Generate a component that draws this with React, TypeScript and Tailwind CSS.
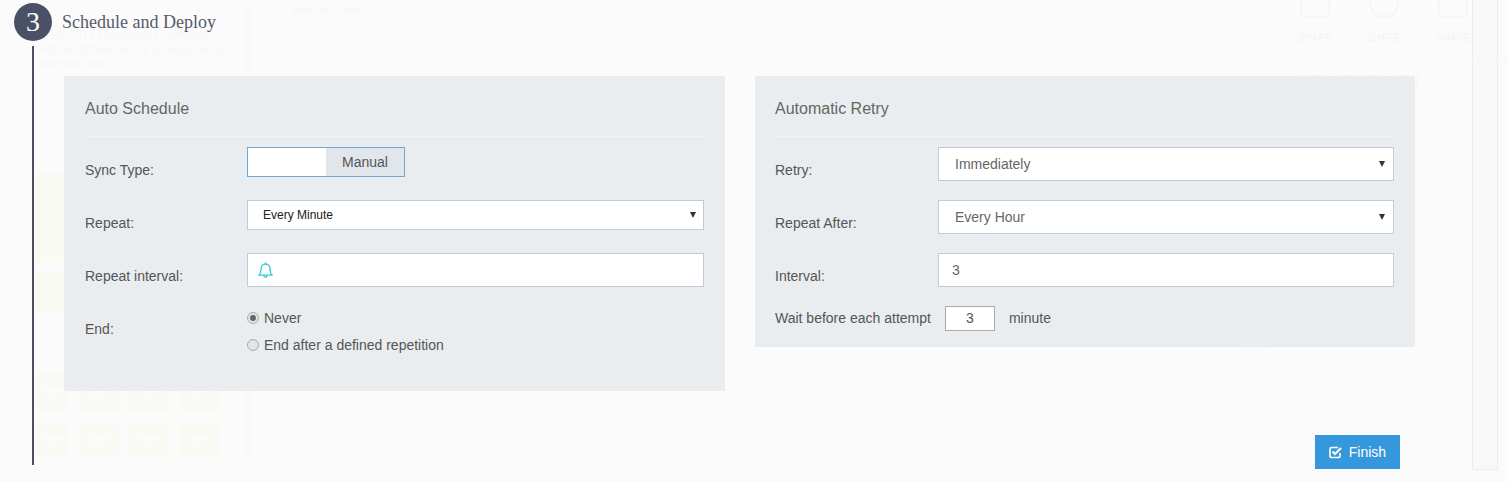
const labelClass = 'shrink-0 text-[14px] leading-[20px] text-[#555]'
const fieldClass =
  'flex-1 flex items-center bg-white border border-[#c2cad8] text-[14px] text-[#666] px-[16px]'

const Caret = () => (
  <span className="ml-auto mr-[-8px] w-0 h-0 border-x-[3.5px] border-x-transparent border-t-[6px] border-t-[#333]" />
)

const Tile = ({ wide }: { wide?: boolean }) => (
  <div
    className={`${wide ? 'w-[40px]' : 'w-[33px]'} h-full bg-[#fafaf5] flex items-center justify-center text-[9px] italic text-white`}
  >
    SAP
  </div>
)

// the faded page that sits behind the overlay
const Backdrop = () => (
  <div className="absolute inset-0 text-[#f7f7f7] text-[12px]">
    <div className="absolute left-[245px] top-[4px] bottom-[24px] w-[5px] bg-[#f9f9f9]" />
    <div className="absolute left-[1245px] top-0 bottom-[12px] w-[20px] bg-[#fafafa]" />
    <div className="absolute left-[1472px] top-0 h-[470px] w-[26px] bg-[#f8f8f8] border-x border-b border-[#ececec]" />
    <div className="absolute left-[38px] top-[28px] leading-[15px]">
      <div>1995-2017 Rainwoods Software</div>
      <div>Not for distribution or production use</div>
      <div>nwoods.com</div>
    </div>
    <div className="absolute left-[293px] top-[3px] leading-[15px]">nwoods.com</div>
    <div className="absolute left-[24px] top-[119px] w-[200px] h-[37px] border border-[#f8f8f8]" />
    <div className="absolute left-[34px] top-[172px] flex flex-col gap-[10px]">
      <div className="h-[90px] w-[30px] bg-[#fafaf5]" />
      <div className="h-[40px] w-[30px] bg-[#fafaf5]" />
    </div>
    <div className="absolute left-[36px] top-[372px] h-[40px] flex gap-[10px]">
      <Tile />
      <Tile wide />
      <Tile wide />
      <Tile wide />
    </div>
    <div className="absolute left-[36px] top-[422px] h-[35px] flex gap-[10px]">
      <Tile />
      <Tile wide />
      <Tile wide />
      <Tile wide />
    </div>
    <div className="absolute left-[1299px] top-0 flex gap-[37px] text-[10px] text-[#f3f3f3]">
      {[0, 1, 2].map((i) => (
        <div key={i} className="w-[32px] flex flex-col items-center">
          <div
            className={`w-[30px] h-[18px] border-x-2 border-b-2 border-[#f5f5f5] ${i === 1 ? 'rounded-b-[15px]' : 'rounded-b-[5px]'}`}
          />
          <div className="mt-[12px]">SHAPE</div>
        </div>
      ))}
    </div>
    <div className="absolute left-[1265px] top-[59px] w-[240px] border-t border-[#f7f7f7]" />
    <div className="absolute left-[1299px] top-[69px] text-[15px] text-[#f5f5f5]">REAL TIME VIEW</div>
  </div>
)

const BellIcon = () => (
  <svg width="15" height="16" viewBox="0 0 15 16" fill="none" stroke="#36c6d3" strokeWidth="1.3" strokeLinejoin="round">
    <path d="M7.5 0.5v1.5" />
    <path d="M0.8 13.2c1.5-1.2 2.2-2.6 2.2-5.2v-1.5a4.5 4.5 0 0 1 9 0v1.5c0 2.6 0.7 4 2.2 5.2z" />
    <path d="M5.8 13.4a1.7 1.7 0 0 0 3.4 0" />
  </svg>
)

const CheckSquare = () => (
  <svg width="14" height="14" viewBox="0 0 14 14" fill="none" stroke="currentColor">
    <path d="M11 8v3a1.5 1.5 0 0 1-1.5 1.5h-7A1.5 1.5 0 0 1 1 11V4a1.5 1.5 0 0 1 1.5-1.5H9" strokeWidth="1.6" />
    <path d="M3.5 6.5l2.5 2.5 6-6" strokeWidth="2.2" />
  </svg>
)

const App = () => {
  return (
    <div className="relative h-[482px] w-[1508px] overflow-hidden bg-[#fbfbfb] font-['Liberation_Sans',sans-serif]">
      <Backdrop />
      <div className="relative">
        {/* Step header */}
        <div className="pl-[14px] pt-[3px] flex items-center gap-[10px]">
          <div className="w-[38px] h-[38px] rounded-full bg-[#4a5167] text-white flex items-center justify-center font-['Liberation_Serif',serif] text-[28px]">
            3
          </div>
          <div className="font-['Liberation_Serif',serif] text-[18px] leading-[22px] text-[#555a6b]">
            Schedule and Deploy
          </div>
        </div>

        {/* Step body */}
        <div className="ml-[32px] mt-[5px] h-[419px] border-l-2 border-[#4a5167] pl-[30px] pt-[30px] flex flex-col">
          <div className="flex items-start gap-[30px]">
            {/* Auto schedule */}
            <div className="w-[661px] h-[315px] bg-[#e9edf0] px-[21px]">
              <div className="h-[61px] border-b border-[#f0f3f5] pt-[24px] text-[16px] leading-[18px] text-[#666]">
                Auto Schedule
              </div>
              <div className="mt-[10px] h-[30px] flex items-start">
                <div className={`${labelClass} w-[162px] mt-[13px]`}>Sync Type:</div>
                <div className="w-[158px] h-[30px] flex border border-[#6fa8d6] bg-white">
                  <div className="w-[78px] bg-white" />
                  <div className="flex-1 bg-[#e1e5ec] text-[14px] text-[#555] flex items-center justify-center">
                    Manual
                  </div>
                </div>
              </div>
              <div className="mt-[23px] h-[30px] flex items-start">
                <div className={`${labelClass} w-[162px] mt-[13px]`}>Repeat:</div>
                <div className={`${fieldClass} h-[30px] !px-[15px] !text-[12px] !text-[#222]`}>
                  Every Minute
                  <Caret />
                </div>
              </div>
              <div className="mt-[23px] flex items-start">
                <div className={`${labelClass} w-[162px] mt-[13px]`}>Repeat interval:</div>
                <div className={`${fieldClass} h-[34px] !px-[10px]`}>
                  <BellIcon />
                </div>
              </div>
              <div className="mt-[20px] flex items-start">
                <div className={`${labelClass} w-[162px] mt-[12px]`}>End:</div>
                <div className="pt-[1px] flex flex-col gap-[7px] text-[14px] leading-[20px] text-[#555]">
                  <div className="flex items-center gap-[5px]">
                    <span className="w-[12px] h-[12px] rounded-full border border-[#aaa] bg-[#e4e4e4] flex items-center justify-center">
                      <span className="w-[6px] h-[6px] rounded-full bg-[#666]" />
                    </span>
                    Never
                  </div>
                  <div className="flex items-center gap-[5px]">
                    <span className="w-[12px] h-[12px] rounded-full border border-[#aaa] bg-[#e4e4e4]" />
                    End after a defined repetition
                  </div>
                </div>
              </div>
            </div>

            {/* Automatic retry */}
            <div className="w-[660px] h-[271px] bg-[#e9edf0] pl-[20px] pr-[21px]">
              <div className="h-[61px] border-b border-[#f0f3f5] pt-[24px] text-[16px] leading-[18px] text-[#666]">
                Automatic Retry
              </div>
              <div className="mt-[10px] flex items-start">
                <div className={`${labelClass} w-[163px] mt-[13px]`}>Retry:</div>
                <div className={`${fieldClass} h-[34px]`}>
                  Immediately
                  <Caret />
                </div>
              </div>
              <div className="mt-[19px] flex items-start">
                <div className={`${labelClass} w-[163px] mt-[13px]`}>Repeat After:</div>
                <div className={`${fieldClass} h-[34px]`}>
                  Every Hour
                  <Caret />
                </div>
              </div>
              <div className="mt-[19px] flex items-start">
                <div className={`${labelClass} w-[163px] mt-[13px]`}>Interval:</div>
                <div className={`${fieldClass} h-[34px] !px-[13px]`}>3</div>
              </div>
              <div className="mt-[19px] flex items-center text-[14px] text-[#555]">
                <span>Wait before each attempt</span>
                <div className="ml-[14px] mr-[14px] w-[50px] h-[25px] bg-white border border-[#aaa] flex items-center justify-center">
                  3
                </div>
                <span>minute</span>
              </div>
            </div>
          </div>

          <button className="mt-auto self-end mr-[108px] -mb-[4px] w-[85px] h-[34px] bg-[#3598dc] text-white text-[14px] flex items-center justify-center gap-[6px]">
            <CheckSquare />
            Finish
          </button>
        </div>
      </div>
    </div>
  )
}

export default App
